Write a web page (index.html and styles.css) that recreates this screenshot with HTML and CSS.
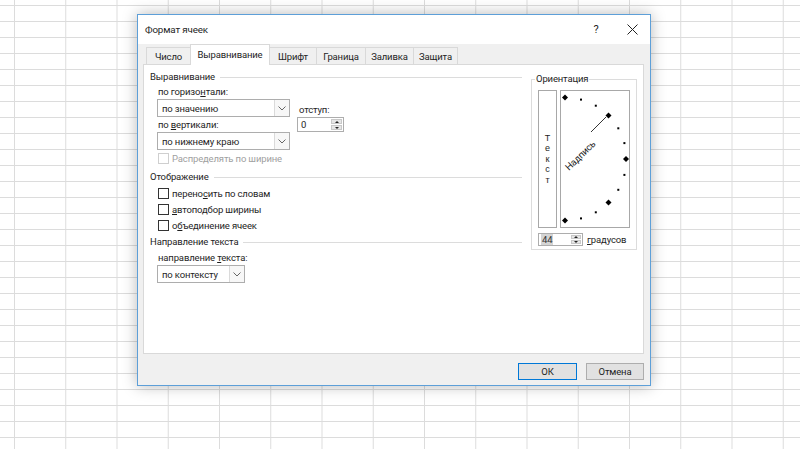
FILE: index.html
```html
<!DOCTYPE html>
<html lang="ru">
<head>
<meta charset="utf-8">
<title>Формат ячеек</title>
<link rel="stylesheet" href="styles.css">
</head>
<body>
<div class="dialog">
  <div class="titlebar">
    <span class="title">Формат ячеек</span>
    <span class="help">?</span>
    <span class="close"><svg width="11" height="11" viewBox="0 0 11 11"><path d="M0.5 0.5L10.5 10.5M10.5 0.5L0.5 10.5" stroke="#222" stroke-width="1" fill="none"/></svg></span>
  </div>
  <div class="body">
    <div class="tabs">
      <div class="tab t1">Число</div>
      <div class="tab t2 active">Выравнивание</div>
      <div class="tab t3">Шрифт</div>
      <div class="tab t4">Граница</div>
      <div class="tab t5">Заливка</div>
      <div class="tab t6">Защита</div>
    </div>
    <div class="page">
      <div class="left">
        <div class="heading"><span>Выравнивание</span><i></i></div>
        <div class="alignrow">
          <div class="colA">
            <div class="lbl">по горизо<u>н</u>тали:</div>
            <div class="combo wide"><span>по значению</span><b><svg width="8" height="5" viewBox="0 0 8 5"><path d="M0.5 0.5L4 4L7.5 0.5" stroke="#666" fill="none"/></svg></b></div>
            <div class="lbl">по <u>в</u>ертикали:</div>
            <div class="combo wide"><span>по нижнему краю</span><b><svg width="8" height="5" viewBox="0 0 8 5"><path d="M0.5 0.5L4 4L7.5 0.5" stroke="#666" fill="none"/></svg></b></div>
          </div>
          <div class="colB">
            <div class="lbl small">отступ:</div>
            <div class="spin"><span>0</span><b><em class="up"></em><em class="down"></em></b></div>
          </div>
        </div>
        <div class="check disabled"><i></i><span>Распределять по ширине</span></div>

        <div class="heading h2"><span>Отображение</span><i></i></div>
        <div class="checks">
          <div class="check"><i></i><span>перено<u>с</u>ить по словам</span></div>
          <div class="check"><i></i><span><u>а</u>втоподбор ширины</span></div>
          <div class="check"><i></i><span>о<u>б</u>ъединение ячеек</span></div>
        </div>

        <div class="heading h3"><span>Направление текста</span><i></i></div>
        <div class="lbl">направление <u>т</u>екста:</div>
        <div class="combo narrow"><span>по контексту</span><b><svg width="8" height="5" viewBox="0 0 8 5"><path d="M0.5 0.5L4 4L7.5 0.5" stroke="#666" fill="none"/></svg></b></div>
      </div>

      <div class="orient">
        <span class="olabel">Ориентация</span>
        <div class="orow">
          <div class="vtext"><span>Т</span><span>е</span><span>к</span><span>с</span><span>т</span></div>
          <div class="dial">
            <svg width="68" height="136" viewBox="0 0 68 136">
              <g fill="#000">
                <polygon points="4,3.5 7,6.5 4,9.5 1,6.5"/>
                <rect x="19" y="7.6" width="2" height="2"/>
                <rect x="33.8" y="13.7" width="2" height="2"/>
                <polygon points="47.5,21.5 50.5,24.5 47.5,27.5 44.5,24.5"/>
                <rect x="56.3" y="36.3" width="2" height="2"/>
                <rect x="62.4" y="51.1" width="2" height="2"/>
                <polygon points="65,65 68,68 65,71 62,68"/>
                <rect x="62.4" y="82.9" width="2" height="2"/>
                <rect x="56.3" y="97.8" width="2" height="2"/>
                <polygon points="47.5,108.5 50.5,111.5 47.5,114.5 44.5,111.5"/>
                <rect x="33.8" y="120.3" width="2" height="2"/>
                <rect x="19" y="126.4" width="2" height="2"/>
                <polygon points="4,126.5 7,129.5 4,132.5 1,129.5"/>
              </g>
              <path d="M30 41L45 26" stroke="#000" stroke-width="0.8"/>
              <text x="0" y="0" transform="translate(8 80) rotate(-44)" class="dialtext">Надпись</text>
            </svg>
          </div>
        </div>
        <div class="deg">
          <div class="spin deg-spin"><span class="sel">44</span><b><em class="up"></em><em class="down"></em></b></div>
          <span class="deglbl"><u>г</u>радусов</span>
        </div>
      </div>
    </div>
    <div class="footer">
      <div class="btn default">ОК</div>
      <div class="btn">Отмена</div>
    </div>
  </div>
</div>
</body>
</html>
```

FILE: styles.css
```css
html, body {
  margin: 0;
  padding: 0;
}
body {
  width: 800px;
  height: 449px;
  overflow: hidden;
  background-color: #fff;
  background-image:
    linear-gradient(to right, #dcdcdc 1px, transparent 1px),
    linear-gradient(to bottom, #dcdcdc 1px, transparent 1px);
  background-size: 51.25px 16px;
  background-position: 14px 5px;
  font-family: Roboto, "Noto Sans", sans-serif;
  font-size: 9.5px;
  letter-spacing: -0.15px;
  color: #1e1e1e;
}
u { text-decoration: underline; text-underline-offset: 1px; }

.dialog {
  margin: 14px 0 0 137px;
  width: 512px;
  height: 370px;
  border: 1px solid #5d9fd8;
  background: #f0f0f0;
  box-shadow: 0 0 14px rgba(0,0,0,0.28);
  display: flex;
  flex-direction: column;
}
.titlebar {
  height: 29px;
  background: #fff;
  display: flex;
  align-items: center;
  padding-left: 7px;
  font-size: 9.8px;
}
.title { flex: 1; }
.help { width: 20px; text-align: center; font-size: 11px; margin-right: 16px; }
.close { width: 20px; display: flex; justify-content: center; margin-right: 8px; }

.body {
  flex: 1;
  display: flex;
  flex-direction: column;
  padding: 0 6px 0 5px;
}
.tabs {
  height: 20px;
  display: flex;
  align-items: flex-end;
  padding-left: 3px;
  position: relative;
  z-index: 1;
}
.tab {
  height: 17px;
  box-sizing: border-box;
  border: 1px solid #d9d9d9;
  border-bottom: none;
  border-right: none;
  background: #f0f0f0;
  display: flex;
  align-items: center;
  justify-content: center;
}
.tab.t6 { border-right: 1px solid #d9d9d9; }
.t1 { width: 44px; }
.t2 { width: 80px; }
.t3 { width: 46px; }
.t4 { width: 49px; }
.t5 { width: 48px; }
.t6 { width: 45px; }
.tab.active {
  height: 21px;
  margin-bottom: -1px;
  background: #fff;
  border-right: 1px solid #d9d9d9;
  padding-bottom: 1px;
}
.tab.active + .tab { border-left: none; }

.page {
  height: 290px;
  box-sizing: border-box;
  border: 1px solid #d9d9d9;
  background: #fff;
  display: flex;
  padding: 5px 0 0 6px;
}
.left {
  width: 372px;
  display: flex;
  flex-direction: column;
}
.heading {
  display: flex;
  align-items: center;
  height: 14px;
  line-height: 14px;
}
.heading i {
  flex: 1;
  height: 1px;
  background: #dcdcdc;
  margin-left: 5px;
}
.h2 { margin-top: 5px; }
.h3 { margin-top: 2px; }
.lbl {
  height: 14px;
  line-height: 14px;
  padding-left: 8px;
  margin-top: 1px;
}
.alignrow { display: flex; }
.colA { width: 147px; display: flex; flex-direction: column; }
.colB { padding-top: 18px; }
.colB .lbl { padding-left: 2px; }
.combo {
  margin-left: 7px;
  height: 18px;
  box-sizing: border-box;
  border: 1px solid #adadad;
  background: #fff;
  display: flex;
  align-items: center;
}
.combo span { flex: 1; padding-left: 4px; }
.combo b {
  width: 14px;
  height: 16px;
  border-left: 1px solid #dadada;
  background: #f7f7f7;
  display: flex;
  align-items: center;
  justify-content: center;
}
.wide { width: 133px; }
.narrow { width: 88px; margin-top: 0; }
.spin {
  width: 47px;
  height: 15px;
  box-sizing: border-box;
  border: 1px solid #adadad;
  background: #fff;
  display: flex;
  margin-top: 0;
}
.spin span { flex: 1; padding-left: 3px; line-height: 13px; }
.spin b {
  width: 11px;
  display: flex;
  flex-direction: column;
  padding: 1px 1px 1px 0;
  gap: 1px;
}
.spin em {
  flex: 1;
  background: #e6e6e6;
  border: 1px solid #c8c8c8;
  position: relative;
}
.spin em::after {
  content: "";
  position: absolute;
  left: 50%;
  top: 50%;
  margin-left: -2px;
  border-left: 2px solid transparent;
  border-right: 2px solid transparent;
}
.spin em.up::after { border-bottom: 2px solid #222; margin-top: -1px; }
.spin em.down::after { border-top: 2px solid #222; margin-top: -1px; }

.check {
  display: flex;
  align-items: center;
  height: 14px;
  padding-left: 8px;
  margin-top: 1px;
}
.check i {
  width: 11px;
  height: 11px;
  box-sizing: border-box;
  border: 1px solid #333;
  background: #fff;
  margin-right: 3px;
}
.check.disabled { color: #a0a0a0; }
.check.disabled i { border-color: #cfcfcf; }
.checks { display: flex; flex-direction: column; margin-top: 1px; }
.checks .check { height: 16px; margin: 0; }
.h3 + .lbl { margin-top: 2px; }

.orient {
  margin: 9px 0 0 9px;
  width: 106px;
  height: 171px;
  box-sizing: border-box;
  border: 1px solid #dcdcdc;
  position: relative;
  padding: 10px 0 0 6px;
}
.olabel {
  position: absolute;
  top: -8px;
  left: 3px;
  background: #fff;
  padding: 0 1px;
  line-height: 14px;
}
.orow { display: flex; gap: 3px; }
.vtext {
  width: 19px;
  height: 138px;
  box-sizing: border-box;
  border: 1px solid #a8a8a8;
  display: flex;
  flex-direction: column;
  align-items: center;
  justify-content: center;
  font-family: "Liberation Sans", Arial, sans-serif;
  font-size: 9px;
  line-height: 10.5px;
  letter-spacing: 0;
}
.vtext span { display: block; height: 10.5px; }
.dial {
  width: 70px;
  height: 138px;
  box-sizing: border-box;
  border: 1px solid #a8a8a8;
}
.dial svg { display: block; }
.dialtext { font-family: Roboto, sans-serif; font-size: 9.5px; fill: #1e1e1e; }
.deg { display: flex; align-items: center; margin-top: 5px; }
.deg-spin { width: 45px; height: 13px; }
.deg-spin span { line-height: 11px; }
.sel { background: #d4d4d4; flex: 0 0 auto !important; padding: 0 1px !important; margin: 0 auto 0 2px; color: #333; }
.deg-spin b { width: 10px; }
.deglbl { margin-left: 4px; }

.footer {
  flex: 1;
  display: flex;
  justify-content: flex-end;
  align-items: flex-start;
  padding-top: 9px;
  gap: 9px;
}
.btn {
  width: 58px;
  height: 17px;
  box-sizing: border-box;
  border: 1px solid #adadad;
  background: #e1e1e1;
  display: flex;
  align-items: center;
  justify-content: center;
}
.btn.default { width: 59px; border-color: #0078d7; }
```
